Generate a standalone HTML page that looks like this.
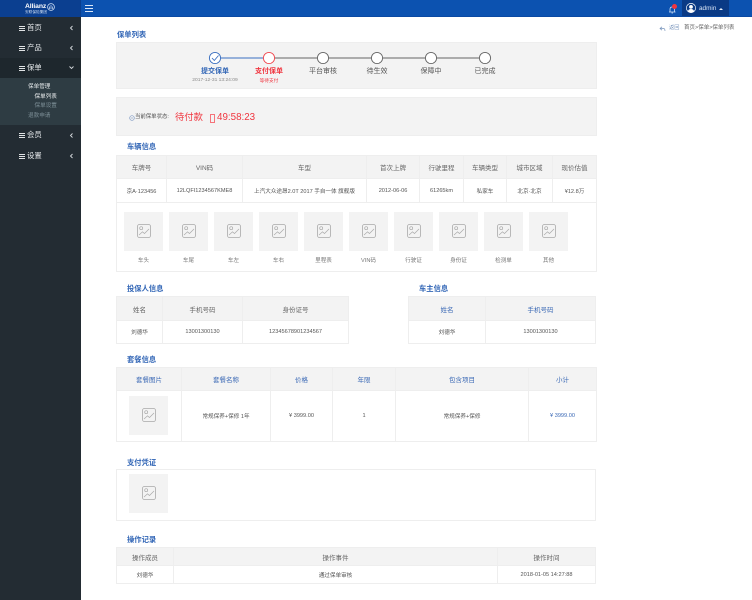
<!DOCTYPE html>
<html lang="zh"><head><meta charset="utf-8"><title>保单列表</title>
<style>
*{box-sizing:border-box}
html,body{margin:0;padding:0;width:752px;height:600px;overflow:hidden;background:#fff}
body{position:relative;font-family:"Liberation Sans","Noto Sans CJK SC",sans-serif;color:#555}
.a{position:absolute;white-space:nowrap;line-height:1}
.c{transform:translateX(-50%)}
.t{position:absolute;font-size:7.3px;line-height:10px;color:#3266b6;font-weight:700;white-space:nowrap}
.panel{position:absolute;left:116px;width:481px;background:#f3f3f3;border:1px solid #eee}
table{position:absolute;border-collapse:collapse;table-layout:fixed;font-size:5.6px;color:#555}
td,th{border:1px solid #eee;padding:0;text-align:center;font-weight:400;white-space:nowrap;overflow:hidden}
th{background:#f3f3f3;font-size:6.5px;color:#666}
.b th{color:#3a68b5}
.img{position:absolute;width:39px;height:39px;background:#f3f3f3}
.img svg{position:absolute;left:12.5px;top:12px}
.lb{position:absolute;font-size:5.6px;line-height:8px;color:#777;transform:translateX(-50%);white-space:nowrap}
.side{position:absolute;left:0;top:17px;width:81px;height:583px;background:#232c33}
.mi{position:absolute;left:27px;font-size:7.4px;line-height:10px;color:#e6e9eb;white-space:nowrap}
.bars{position:absolute;left:19px;width:6px;height:5px;border-top:1px solid #e0e3e5;border-bottom:1px solid #e0e3e5}
.bars:after{content:"";position:absolute;left:0;right:0;top:1px;height:1px;background:#e0e3e5}
.sub{position:absolute;font-size:5.6px;line-height:8px;white-space:nowrap}
</style></head><body>

<svg width="0" height="0" style="position:absolute"><defs>
<symbol id="pic" viewBox="0 0 14 14"><rect x=".5" y=".5" width="13" height="13" rx="2" fill="none" stroke="#a9a9a9" stroke-width=".8"/><circle cx="4.2" cy="4.2" r="1.5" fill="none" stroke="#a9a9a9" stroke-width=".7"/><path d="M2 11 L5.5 7.800 L7.500 9.500 L12 5" fill="none" stroke="#a9a9a9" stroke-width=".7"/></symbol>
</defs></svg>

<!-- header -->
<div class="a" style="left:0;top:0;width:752px;height:17px;background:#0c52b0;border-bottom:1px solid #0a49a3"></div>
<div class="a" style="left:0;top:0;width:81px;height:17px;background:#0b3f90"></div>
<div class="a" style="left:25px;top:4px;font-size:6.800px;font-weight:700;color:#fff;letter-spacing:-.1px">Allianz</div>
<svg class="a" style="left:47px;top:3px" width="8" height="8" viewBox="0 0 8 8"><circle cx="4" cy="4" r="3.400" fill="none" stroke="#cfe0f5" stroke-width=".8"/><path d="M2.500 6V3.500M4 6V2M5.500 6V3.500" stroke="#cfe0f5" stroke-width=".7"/></svg>
<div class="a" style="left:25px;top:10.500px;font-size:3.700px;color:#c6d6ee">安联保险集团</div>
<div class="a" style="left:85px;top:5px;width:8px;height:7px;border-top:1px solid #dce8f8;border-bottom:1px solid #dce8f8"></div>
<div class="a" style="left:85px;top:8px;width:8px;height:1px;background:#dce8f8"></div>

<svg class="a" style="left:668px;top:5px" width="9" height="9" viewBox="0 0 9 9"><path d="M1 7h6.500M2 7V4.200C2 2.800 3 2 4.200 2S6.500 2.800 6.500 4.200V7M3.500 8h1.500" fill="none" stroke="#cfe0f5" stroke-width=".8"/></svg>
<div class="a" style="left:672px;top:4px;width:5px;height:5px;border-radius:50%;background:#f0353f"></div>
<div class="a" style="left:682px;top:0;width:47px;height:16px;background:#0a3a85"></div>
<svg class="a" style="left:686px;top:3px" width="10" height="10" viewBox="0 0 10 10"><circle cx="5" cy="5" r="4.600" fill="none" stroke="#fff" stroke-width=".7"/><circle cx="5" cy="3.900" r="1.900" fill="#fff"/><path d="M1.900 8.200C2.400 6.600 3.600 6 5 6s2.600.6 3.100 2.200C7.200 9.200 6 9.600 5 9.600S2.800 9.200 1.900 8.200Z" fill="#fff"/></svg>
<div class="a" style="left:699px;top:6px;font-size:6.400px;color:#dbe6f6">admin</div>
<div class="a" style="left:719px;top:8px;width:0;height:0;border-left:2px solid transparent;border-right:2px solid transparent;border-bottom:2px solid #e8eef8"></div>

<!-- sidebar -->
<div class="side"></div>
<div class="a" style="left:0;top:58px;width:81px;height:20px;background:#1e272d"></div>
<div class="a" style="left:0;top:78px;width:81px;height:47px;background:#2e3c43"></div>
<i class="bars" style="top:26px"></i><div class="mi" style="top:23px">首页</div>
<i class="bars" style="top:46px"></i><div class="mi" style="top:43px">产品</div>
<i class="bars" style="top:66px"></i><div class="mi" style="top:63px">保单</div>
<i class="bars" style="top:133px"></i><div class="mi" style="top:130px">会员</div>
<i class="bars" style="top:154px"></i><div class="mi" style="top:151px">设置</div>
<svg class="a" style="left:0;top:0" width="81" height="170" viewBox="0 0 81 170"><g fill="none" stroke="#d5d9dc" stroke-width=".9"><path d="M72.500 26 70.500 28 72.500 30"/><path d="M72.500 46 70.500 48 72.500 50"/><path d="M69.500 66.500 71.500 68.500 73.500 66.500"/><path d="M72.500 133.500 70.500 135.500 72.500 137.500"/><path d="M72.500 154 70.500 156 72.500 158"/></g></svg>
<div class="sub" style="left:28px;top:82.500px;color:#e4e8ea">保单管理</div>
<div class="sub" style="left:34.500px;top:93px;color:#eef0f1">保单列表</div>
<div class="sub" style="left:34.500px;top:102px;color:#7d8f97">保单设置</div>
<div class="sub" style="left:28px;top:112px;color:#7d8f97">退款申请</div>

<!-- breadcrumb -->
<svg class="a" style="left:659px;top:26px" width="7" height="6" viewBox="0 0 7 6"><path d="M3 .8 1 2.500 3 4.200M1 2.500H4.500C5.700 2.500 6 3.500 6 5" fill="none" stroke="#7a96bd" stroke-width=".7"/></svg>
<div class="a" style="left:669px;top:25.500px;font-size:5.200px;color:#7a96bd">返回</div>
<div class="a" style="left:684px;top:26px;font-size:5.500px;color:#666">首页&gt;保单&gt;保单列表</div>

<div class="t" style="left:117px;top:30px">保单列表</div>

<!-- steps -->
<div class="panel" style="top:42px;height:47px"></div>
<svg class="a" style="left:200px;top:48px" width="300" height="20" viewBox="200 48 300 20">
<path d="M221 58H263" stroke="#3a6fc0" stroke-width="1"/>
<path d="M275 58H317M329 58H371M383 58H425M437 58H479" stroke="#666" stroke-width="1"/>
<circle cx="215" cy="58" r="5.600" fill="#fff" stroke="#3a6fc0" stroke-width=".9"/>
<path d="M212 58 214.300 60.500 218.500 55.500" fill="none" stroke="#3a6fc0" stroke-width=".9"/>
<circle cx="269" cy="58" r="5.600" fill="#fff" stroke="#f0484f" stroke-width=".9"/>
<circle cx="323" cy="58" r="5.600" fill="#fff" stroke="#666" stroke-width=".9"/>
<circle cx="377" cy="58" r="5.600" fill="#fff" stroke="#666" stroke-width=".9"/>
<circle cx="431" cy="58" r="5.600" fill="#fff" stroke="#666" stroke-width=".9"/>
<circle cx="485" cy="58" r="5.600" fill="#fff" stroke="#666" stroke-width=".9"/>
</svg>
<div class="a c" style="left:215px;top:68px;font-size:7px;font-weight:700;color:#3266b6">提交保单</div>
<div class="a c" style="left:215px;top:78.500px;font-size:4.900px;color:#888">2017-12-31 13:24:09</div>
<div class="a c" style="left:269px;top:68px;font-size:7px;font-weight:700;color:#f0353f">支付保单</div>
<div class="a c" style="left:269px;top:78.500px;font-size:4.700px;color:#f0353f">等待支付</div>
<div class="a c" style="left:323px;top:68px;font-size:7px;color:#555">平台审核</div>
<div class="a c" style="left:377px;top:68px;font-size:7px;color:#555">待生效</div>
<div class="a c" style="left:431px;top:68px;font-size:7px;color:#555">保障中</div>
<div class="a c" style="left:485px;top:68px;font-size:7px;color:#555">已完成</div>

<!-- status -->
<div class="panel" style="top:97px;height:39px"></div>
<svg class="a" style="left:129px;top:115px" width="6" height="6" viewBox="0 0 6 6"><circle cx="3" cy="3" r="2.300" fill="none" stroke="#7f9ac4" stroke-width=".7"/><path d="M1.800 3H4.200" stroke="#7f9ac4" stroke-width=".6"/></svg>
<div class="a" style="left:135px;top:114.500px;font-size:5.400px;color:#555">当前保单状态:</div>
<div class="a" style="left:175px;top:112.500px;font-size:9.300px;color:#f0353f">待付款</div>
<div class="a" style="left:210px;top:113.500px;width:5px;height:9px;border:1px solid #f5737a"></div>
<div class="a" style="left:217px;top:112.500px;font-size:9.800px;color:#f0353f">49:58:23</div>

<!-- vehicle -->
<div class="t" style="left:127px;top:142px">车辆信息</div>
<div class="a" style="left:116px;top:155px;width:481px;height:117px;border:1px solid #eee"></div>
<table style="left:116px;top:155px;width:480px;height:47px">
<colgroup><col style="width:50px"><col style="width:76px"><col style="width:124px"><col style="width:53px"><col style="width:44px"><col style="width:43px"><col style="width:46px"><col style="width:44px"></colgroup>
<tr style="height:23px"><th>车牌号</th><th>VIN码</th><th>车型</th><th>首次上牌</th><th>行驶里程</th><th>车辆类型</th><th>城市区域</th><th>现价估值</th></tr>
<tr style="height:24px"><td>京A·123456</td><td>12LQFI1234567KME8</td><td>上汽大众途昂2.0T 2017 手自一体 旗舰版</td><td>2012-06-06</td><td>61265km</td><td>私家车</td><td>北京·北京</td><td>¥12.8万</td></tr>
</table>

<div class="img" style="left:124px;top:212px"><svg width="14" height="14"><use href="#pic"/></svg></div>
<div class="img" style="left:169px;top:212px"><svg width="14" height="14"><use href="#pic"/></svg></div>
<div class="img" style="left:214px;top:212px"><svg width="14" height="14"><use href="#pic"/></svg></div>
<div class="img" style="left:259px;top:212px"><svg width="14" height="14"><use href="#pic"/></svg></div>
<div class="img" style="left:304px;top:212px"><svg width="14" height="14"><use href="#pic"/></svg></div>
<div class="img" style="left:349px;top:212px"><svg width="14" height="14"><use href="#pic"/></svg></div>
<div class="img" style="left:394px;top:212px"><svg width="14" height="14"><use href="#pic"/></svg></div>
<div class="img" style="left:439px;top:212px"><svg width="14" height="14"><use href="#pic"/></svg></div>
<div class="img" style="left:484px;top:212px"><svg width="14" height="14"><use href="#pic"/></svg></div>
<div class="img" style="left:529px;top:212px"><svg width="14" height="14"><use href="#pic"/></svg></div>
<div class="lb" style="left:143.500px;top:257px">车头</div>
<div class="lb" style="left:188.500px;top:257px">车尾</div>
<div class="lb" style="left:233.500px;top:257px">车左</div>
<div class="lb" style="left:278.500px;top:257px">车右</div>
<div class="lb" style="left:323.500px;top:257px">里程表</div>
<div class="lb" style="left:368.500px;top:257px">VIN码</div>
<div class="lb" style="left:413.500px;top:257px">行驶证</div>
<div class="lb" style="left:458.500px;top:257px">身份证</div>
<div class="lb" style="left:503.500px;top:257px">检测单</div>
<div class="lb" style="left:548.500px;top:257px">其他</div>

<!-- insured -->
<div class="t" style="left:127px;top:284px">投保人信息</div>
<table style="left:116px;top:296px;width:232px;height:47px">
<colgroup><col style="width:46px"><col style="width:80px"><col style="width:106px"></colgroup>
<tr style="height:24px"><th>姓名</th><th>手机号码</th><th>身份证号</th></tr>
<tr style="height:23px"><td>刘德华</td><td>13001300130</td><td>12345678901234567</td></tr>
</table>

<div class="t" style="left:419px;top:284px">车主信息</div>
<table class="b" style="left:408px;top:296px;width:187px;height:47px">
<colgroup><col style="width:77px"><col style="width:110px"></colgroup>
<tr style="height:24px"><th>姓名</th><th>手机号码</th></tr>
<tr style="height:23px"><td>刘德华</td><td>13001300130</td></tr>
</table>

<!-- package -->
<div class="t" style="left:127px;top:355px">套餐信息</div>
<table class="b" style="left:116px;top:367px;width:480px;height:74px">
<colgroup><col style="width:65px"><col style="width:89px"><col style="width:62px"><col style="width:63px"><col style="width:133px"><col style="width:68px"></colgroup>
<tr style="height:23px"><th>套餐图片</th><th>套餐名称</th><th>价格</th><th>年限</th><th>包含项目</th><th>小计</th></tr>
<tr style="height:51px"><td></td><td>常规保养+保修 1年</td><td>¥ 3999.00</td><td>1</td><td>常规保养+保修</td><td style="color:#3a68b5">¥ 3999.00</td></tr>
</table>
<div class="img" style="left:129px;top:396px"><svg width="14" height="14"><use href="#pic"/></svg></div>

<!-- payment -->
<div class="t" style="left:127px;top:458px">支付凭证</div>
<div class="a" style="left:116px;top:469px;width:480px;height:52px;border:1px solid #eee"></div>
<div class="img" style="left:129px;top:474px"><svg width="14" height="14"><use href="#pic"/></svg></div>

<!-- log -->
<div class="t" style="left:127px;top:535px">操作记录</div>
<table style="left:116px;top:547px;width:479px;height:36px">
<colgroup><col style="width:57px"><col style="width:324px"><col style="width:98px"></colgroup>
<tr style="height:18px"><th>操作成员</th><th>操作事件</th><th>操作时间</th></tr>
<tr style="height:18px"><td>刘德华</td><td>通过保单审核</td><td>2018-01-05 14:27:88</td></tr>
</table>

</body></html>
